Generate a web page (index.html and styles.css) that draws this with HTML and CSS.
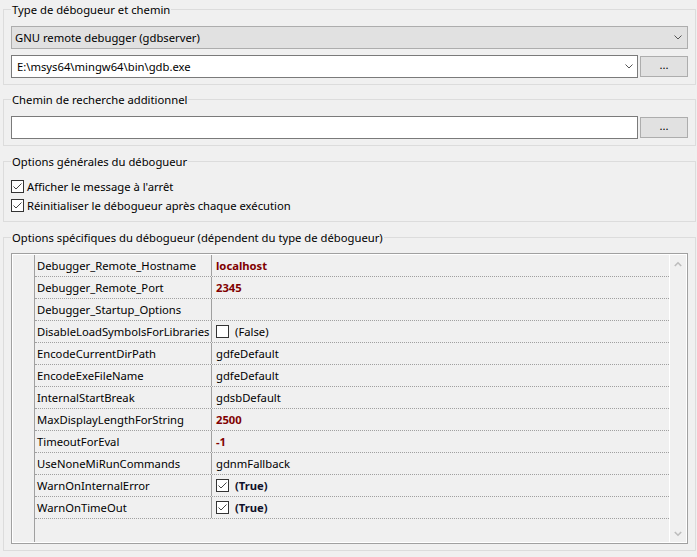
FILE: index.html
```html
<!DOCTYPE html>
<html lang="fr">
<head>
<meta charset="utf-8">
<title>Options du débogueur</title>
<link rel="stylesheet" href="styles.css">
</head>
<body>
<div class="page">
  <fieldset class="group g1">
    <legend>Type de débogueur et chemin</legend>
    <div class="combo combo-ro">
      <span>GNU remote debugger (gdbserver)</span>
      <svg class="drop" width="8" height="5" viewBox="0 0 8 5"><path d="M0.5 0.5 L4 4 L7.5 0.5" fill="none" stroke="#555" stroke-width="1"/></svg>
    </div>
    <div class="path-row">
      <div class="combo combo-edit">
        <span>E:\msys64\mingw64\bin\gdb.exe</span>
        <svg class="drop" width="8" height="5" viewBox="0 0 8 5"><path d="M0.5 0.5 L4 4 L7.5 0.5" fill="none" stroke="#555" stroke-width="1"/></svg>
      </div>
      <button class="browse">...</button>
    </div>
  </fieldset>

  <fieldset class="group g2">
    <legend>Chemin de recherche additionnel</legend>
    <div class="path-row">
      <div class="combo combo-edit"><span></span></div>
      <button class="browse">...</button>
    </div>
  </fieldset>

  <fieldset class="group g3">
    <legend>Options générales du débogueur</legend>
    <div class="check-row">
      <svg class="cb" width="13" height="13" viewBox="0 0 13 13"><rect x="0.5" y="0.5" width="12" height="12" fill="#fff" stroke="#333"/><path d="M2.5 6.5 L5 9 L10.5 3.5" fill="none" stroke="#444" stroke-width="1"/></svg>
      <span>Afficher le message à l'arrêt</span>
    </div>
    <div class="check-row">
      <svg class="cb" width="13" height="13" viewBox="0 0 13 13"><rect x="0.5" y="0.5" width="12" height="12" fill="#fff" stroke="#333"/><path d="M2.5 6.5 L5 9 L10.5 3.5" fill="none" stroke="#444" stroke-width="1"/></svg>
      <span>Réinitialiser le débogueur après chaque exécution</span>
    </div>
  </fieldset>

  <fieldset class="group g4">
    <legend>Options spécifiques du débogueur (dépendent du type de débogueur)</legend>
    <div class="grid">
      <div class="fixed-col"></div>
      <div class="rows">
        <div class="row"><div class="name">Debugger_Remote_Hostname</div><div class="value mod">localhost</div></div>
        <div class="row"><div class="name">Debugger_Remote_Port</div><div class="value mod">2345</div></div>
        <div class="row"><div class="name">Debugger_Startup_Options</div><div class="value"></div></div>
        <div class="row"><div class="name">DisableLoadSymbolsForLibraries</div><div class="value">
          <svg class="cb" width="13" height="13" viewBox="0 0 13 13"><rect x="0.5" y="0.5" width="12" height="12" fill="#fff" stroke="#333"/></svg>
          <span>(False)</span></div></div>
        <div class="row"><div class="name">EncodeCurrentDirPath</div><div class="value">gdfeDefault</div></div>
        <div class="row"><div class="name">EncodeExeFileName</div><div class="value">gdfeDefault</div></div>
        <div class="row"><div class="name">InternalStartBreak</div><div class="value">gdsbDefault</div></div>
        <div class="row"><div class="name">MaxDisplayLengthForString</div><div class="value mod">2500</div></div>
        <div class="row"><div class="name">TimeoutForEval</div><div class="value mod">-1</div></div>
        <div class="row"><div class="name">UseNoneMiRunCommands</div><div class="value">gdnmFallback</div></div>
        <div class="row"><div class="name">WarnOnInternalError</div><div class="value">
          <svg class="cb" width="13" height="13" viewBox="0 0 13 13"><rect x="0.5" y="0.5" width="12" height="12" fill="#fff" stroke="#333"/><path d="M2.5 6.5 L5 9 L10.5 3.5" fill="none" stroke="#444" stroke-width="1"/></svg>
          <span class="bool-on">(True)</span></div></div>
        <div class="row"><div class="name">WarnOnTimeOut</div><div class="value">
          <svg class="cb" width="13" height="13" viewBox="0 0 13 13"><rect x="0.5" y="0.5" width="12" height="12" fill="#fff" stroke="#333"/><path d="M2.5 6.5 L5 9 L10.5 3.5" fill="none" stroke="#444" stroke-width="1"/></svg>
          <span class="bool-on">(True)</span></div></div>
      </div>
      <div class="vscroll">
        <div class="sbtn"><svg width="8" height="6" viewBox="0 0 8 6"><path d="M0.8 5 L4 1.8 L7.2 5" fill="none" stroke="#bdbdbd" stroke-width="1.6"/></svg></div>
        <div class="sbtn"><svg width="8" height="6" viewBox="0 0 8 6"><path d="M0.8 1 L4 4.2 L7.2 1" fill="none" stroke="#bdbdbd" stroke-width="1.6"/></svg></div>
      </div>
    </div>
  </fieldset>
</div>
</body>
</html>
```

FILE: styles.css
```css
html, body {
  margin: 0;
  padding: 0;
  background: #f0f0f0;
}

body {
  font-family: "Noto Sans", "Open Sans", "Liberation Sans", sans-serif;
  font-size: 11.25px;
  color: #000;
}

.page {
  width: 693px;
  padding: 2px 0 0 3px;
}

.group {
  margin: 0;
  border: 1px solid #dcdcdc;
  padding: 9px 7px 6px 7px;
  min-width: 0;
}

.group legend {
  padding: 0 1px;
  height: 15px;
  line-height: 15px;
}

.g2 { margin-top: 7px; }
.g3 { margin-top: 8px; padding-top: 8px; }
.g4 { margin-top: 8px; padding-top: 8px; }

.combo {
  box-sizing: border-box;
  height: 23px;
  display: flex;
  align-items: center;
  justify-content: space-between;
  white-space: nowrap;
}

.combo-ro {
  background: #e1e1e1;
  border: 1px solid #adadad;
  padding: 0 5px 0 3px;
  margin-bottom: 6px;
}

.combo-edit {
  flex: 1;
  background: #fff;
  border: 1px solid #7a7a7a;
  padding: 0 4px 0 5px;
}

.drop { display: block; }

.path-row {
  display: flex;
  gap: 2px;
  align-items: flex-start;
}

.browse {
  width: 48px;
  height: 21px;
  margin: 1px 0 0 0;
  padding: 0 0 4px 0;
  background: #e1e1e1;
  border: 1px solid #adadad;
  font: inherit;
  color: #000;
  line-height: 12px;
}

.check-row {
  height: 19px;
  display: flex;
  align-items: center;
  white-space: nowrap;
}

.check-row .cb { margin-right: 3px; }

.cb { display: block; flex: none; }

.grid {
  box-sizing: border-box;
  height: 291px;
  border: 1px solid #a0a0a0;
  padding: 1px;
  box-shadow: inset 0 0 0 1px #fff;
  display: flex;
}

.fixed-col {
  width: 21px;
  flex: none;
  border-right: 1px solid #a0a0a0;
}

.rows {
  flex: 1;
  min-width: 0;
}

.row {
  box-sizing: border-box;
  height: 22px;
  border-bottom: 1px dotted #a0a0a0;
  display: flex;
  white-space: nowrap;
}

.name {
  box-sizing: border-box;
  width: 177px;
  flex: none;
  padding-left: 2px;
  border-right: 1px solid #a0a0a0;
  display: flex;
  align-items: center;
}

.value {
  flex: 1;
  padding-left: 4px;
  display: flex;
  align-items: center;
}

.value .cb { margin-right: 6px; }

.mod {
  color: #800000;
  font-weight: bold;
}

.bool-on {
  font-weight: bold;
  color: #10102a;
}

.vscroll {
  width: 16px;
  flex: none;
  border-left: 1px solid #fff;
  display: flex;
  flex-direction: column;
  justify-content: space-between;
}

.sbtn {
  height: 17px;
  display: flex;
  align-items: center;
  justify-content: center;
}

.sbtn svg { display: block; }
```
